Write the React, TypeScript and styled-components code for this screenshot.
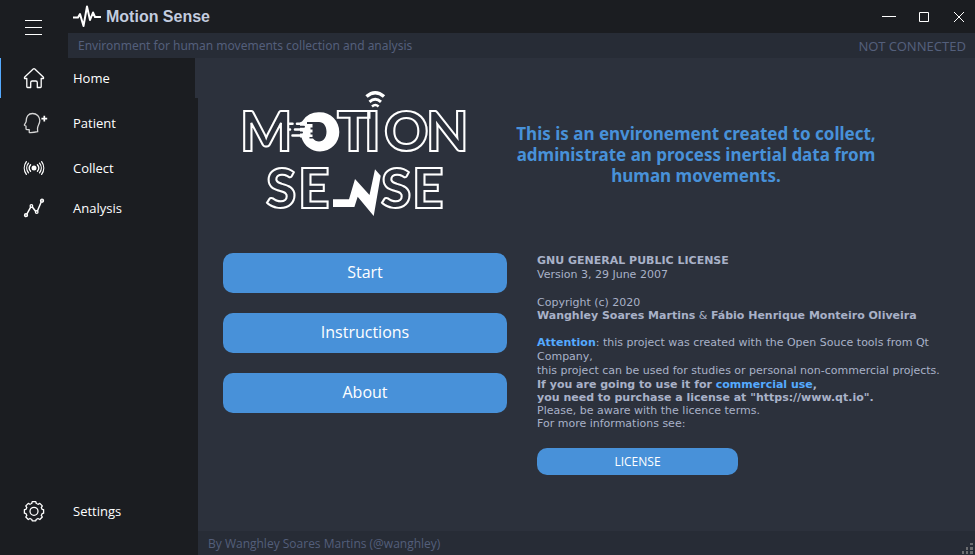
import React from "react";
import styled, { createGlobalStyle } from "styled-components";

const ui = `"Open Sans", "Noto Sans", sans-serif`;

const GlobalStyle = createGlobalStyle`
  * { box-sizing: border-box; }
  html, body, #root { height: 100%; }
  body { margin: 0; background: #2c313c; font-family: ${ui}; font-size: 13px; }
  button { font: inherit; color: inherit; border: 0; padding: 0; background: none; cursor: pointer; }
`;

const Shell = styled.div`
  min-height: 100%;
  display: grid;
  grid-template-rows: auto 1fr;
`;

const Header = styled.header`
  display: grid;
  grid-template-columns: 68px 1fr;
  background: #1b1d21;
`;

const MenuButton = styled.button`
  display: grid;
  place-items: center;
  padding-bottom: 2px;
  color: #fff;
`;

const TitleBar = styled.div`
  height: 33px;
  display: flex;
  align-items: center;
  justify-content: space-between;
  padding: 0 5px;
`;

const Brand = styled.h1`
  display: flex;
  align-items: center;
  gap: 5px;
  margin: 0;
  font: bold 16px/20px "Liberation Sans", Arial, sans-serif;
  color: #c3ccdf;
`;

const WindowControls = styled.div`
  display: flex;
  gap: 13px;
`;

const WindowButton = styled.button`
  display: grid;
  place-items: center;
  width: 22px;
  height: 28px;
  color: #fff;
`;

const StatusBar = styled.div`
  height: 25px;
  display: flex;
  align-items: center;
  justify-content: space-between;
  padding: 0 9px 0 10px;
  background: #272c36;
  color: #545f7b;
  font-family: "Noto Sans", sans-serif;
`;

const Tagline = styled.span`
  font-size: 12px;
`;

const Body = styled.div`
  display: grid;
  grid-template-columns: 198px 1fr;
`;

const Sidebar = styled.nav`
  display: flex;
  flex-direction: column;
  padding-bottom: 24px;
  background: #1b1d21;
`;

const NavItem = styled.button<{ $active?: boolean; $tall?: boolean; $last?: boolean }>`
  display: grid;
  grid-template-columns: 68px 1fr;
  align-items: center;
  height: ${(p) => (p.$tall ? 50 : 40)}px;
  margin-top: ${(p) => (p.$last ? "auto" : 0)};
  color: #fff;
  text-align: left;
  box-shadow: ${(p) => (p.$active ? "inset 1px 0 #55aaff, inset -3px 0 #2c313c" : "none")};
  svg { justify-self: center; }
  span { padding-left: 5px; }
`;

const IconFrame = styled.svg`
  overflow: visible;
`;

const Main = styled.main`
  display: grid;
  grid-template-rows: 1fr auto;
  background: #2c313c;
`;

const Page = styled.div`
  padding: 30px 25px 0;
`;

const Hero = styled.section`
  display: flex;
  align-items: center;
  gap: 35px;
  padding-left: 17px;
`;

const Headline = styled.h2`
  flex: 1;
  max-width: 382px;
  margin: 0;
  text-align: center;
  font-family: "Noto Sans", sans-serif;
  font-size: 17px;
  line-height: 21px;
  color: #4891d9;
`;

const Columns = styled.section`
  display: grid;
  grid-template-columns: 284fr 413fr;
  gap: 30px;
  margin-top: 33px;
`;

const Actions = styled.div`
  display: flex;
  flex-direction: column;
  gap: 20px;
`;

const ActionButton = styled.button`
  height: 40px;
  padding-bottom: 2px;
  border-radius: 10px;
  background: #4891d9;
  color: #fff;
  font-size: 16px;
`;

const License = styled.div`
  padding-top: 1px;
  color: #a9b1c8;
  font: 11px/14px "DejaVu Sans", sans-serif;
`;

const Paragraph = styled.p<{ $joined?: boolean; $tight?: boolean }>`
  margin: 0 0 ${(p) => (p.$joined ? 0 : 14)}px;
  line-height: ${(p) => (p.$tight ? 13 : 14)}px;
`;

const Accent = styled.b`
  color: #55aaff;
`;

const LicenseButton = styled.button`
  width: 201px;
  height: 27px;
  margin-top: 4px;
  border-radius: 10px;
  background: #4891d9;
  color: #fff;
  font: 12px ${ui};
`;

const Footer = styled.footer`
  display: flex;
  align-items: center;
  justify-content: space-between;
  height: 24px;
  padding-left: 10px;
  background: #272c36;
  color: #545f7b;
  font-size: 12px;
  svg { align-self: flex-end; }
`;

const LogoText = styled.text`
  font-family: Lato, "Open Sans", sans-serif;
  font-weight: 900;
  font-size: 55px;
  fill: none;
  stroke: #fff;
  stroke-width: 2;
`;

function Icon({ children }: { children: React.ReactNode }) {
  return (
    <IconFrame width="24" height="24" viewBox="0 0 24 24" fill="none" stroke="#fff" strokeWidth="1.3" strokeLinejoin="round" strokeLinecap="round" aria-hidden="true">
      {children}
    </IconFrame>
  );
}

function HomeIcon() {
  return (
    <Icon>
      <path d="M11.2 3 2.5 11.2v1.3h2.3v8.3q0 .7.7.7h3.2v-5q0-1.5 1.5-1.5h3.6q1.5 0 1.5 1.5v5h3.2q.7 0 .7-.7v-8.3h2.3v-1.3L12.8 3q-.8-.7-1.6 0Z" />
    </Icon>
  );
}

function PatientIcon() {
  return (
    <Icon>
      <path d="M7.300 21.500 7.200 18.600H5.200q-1.200 0-1.200-1.200v-2.400l-1.300-.5q-.5-.3-.2-.8l1.600-3C4 5.500 6.500 2.500 10.500 2.500c4.200 0 7.300 2.800 7.300 7 0 3.600-2.300 5-2.300 8.300l.2 2.900q-4.300 1-8.400.8Z" stroke="#d5d5d5" />
      <path d="M22.300 4.700v5.800M19.400 7.600h5.800" strokeWidth="1.700" strokeLinecap="butt" />
    </Icon>
  );
}

function CollectIcon() {
  return (
    <Icon>
      <circle cx="12" cy="12" r="2.500" fill="#fff" stroke="none" />
      <path d="M8.600 8.700a5 5 0 0 0 0 6.600M6.500 7.200a7.500 7.500 0 0 0 0 9.600M4.400 5.700a10.500 10.500 0 0 0 0 12.600M15.400 8.700a5 5 0 0 1 0 6.600M17.500 7.200a7.500 7.500 0 0 1 0 9.600M19.600 5.700a10.500 10.500 0 0 1 0 12.600" />
    </Icon>
  );
}

function AnalysisIcon() {
  return (
    <Icon>
      <path d="m4.700 18.400 4-7.200m1.800.1 3.300 4.200m1.700-.8 3.900-9.200" strokeWidth="1.500" />
      <circle cx="4" cy="19.200" r="1.500" fill="#aaa" />
      <circle cx="9.400" cy="10" r="1.300" />
      <circle cx="14.700" cy="16" r="1.300" />
      <circle cx="20" cy="4.700" r="1.500" fill="#aaa" />
    </Icon>
  );
}

function SettingsIcon() {
  return (
    <Icon>
      <path d="M9.700 4.500 10.200 2.700h3.600l.5 1.800q1 .3 1.700.8l1.800-.9 2.500 2.500-1 1.700q.5.800.8 1.700l1.500.4v3.500l-1.500.4q-.3.900-.8 1.700l1 1.700-2.500 2.500-1.800-1q-.7.500-1.700.8l-.5 1.500h-3.600l-.5-1.500q-.900-.3-1.700-.8l-1.700 1-2.500-2.500 1-1.700q-.5-.8-.8-1.700l-1.600-.4v-3.500l1.600-.4q.3-.9.8-1.700l-1-1.700 2.500-2.500 1.700.9q.8-.5 1.700-.8Z" />
      <circle cx="12" cy="12.300" r="4" />
    </Icon>
  );
}

function Logo() {
  return (
    <svg width="230" height="132" viewBox="240 88 230 132" role="img" aria-label="Motion Sense">
      <LogoText y="151">
        <tspan x="240">M</tspan>
        <tspan x="337">T</tspan>
        <tspan x="364">I</tspan>
        <tspan x="384">O</tspan>
        <tspan x="426">N</tspan>
      </LogoText>
      <LogoText y="208">
        <tspan x="266">S</tspan>
        <tspan x="298">E</tspan>
        <tspan x="381">S</tspan>
        <tspan x="412">E</tspan>
      </LogoText>
      <path
        fill="#fff"
        fillRule="evenodd"
        d="M320 112.300a19.300 19.600 0 1 1 0 39.200a19.300 19.600 0 0 1-18.500-14h-1.500v-15l2-1a19 19 0 0 1 18-9.200ZM307 122v2h5.500v3.500h-2v2h2v3h-2v2h2v2.500h-3v1.500h3.500c1.500 2 3.500 3 6 3 4.500 0 7.500-4 7.500-9.700s-3-9.800-7.500-9.800Z"
      />
      <path d="M289.500 123.800h3M297 123.800h7M289.500 129.500h.5M295 129.500h7M292.500 135.500h9" stroke="#fff" strokeWidth="2.600" strokeLinecap="round" />
      <path d="M298 126.700h6M298 132.500h4" stroke="#2c313c" strokeWidth="2" strokeLinecap="round" />
      <g fill="none" stroke="#fff" strokeWidth="3.500">
        <path d="M366.500 96.500q8.700-7.500 17.500 0" />
        <path d="M369.500 101.800q5.700-5 11.500 0" strokeWidth="3" />
        <path d="M372 106.500q3.300-3 6.600 0" strokeWidth="2.500" />
      </g>
      <path d="M333 199.300h16l6-20.300 14.500 16 5.500-25.700 5.700 6.400-7 40.300-16-19.300-3.300 10.300H333Z" fill="#fff" />
    </svg>
  );
}

const navItems = [
  { label: "Home", icon: <HomeIcon />, active: true },
  { label: "Patient", icon: <PatientIcon />, tall: true },
  { label: "Collect", icon: <CollectIcon /> },
  { label: "Analysis", icon: <AnalysisIcon /> },
];

export default function App() {
  return (
    <Shell>
      <GlobalStyle />
      <Header>
        <MenuButton aria-label="Toggle menu">
          <svg width="18" height="16" viewBox="0 0 18 16" stroke="currentColor" aria-hidden="true">
            <path d="M0 .5h17M0 7.500h17M0 14.500h17" />
          </svg>
        </MenuButton>
        <div>
          <TitleBar>
            <Brand>
              <svg width="28" height="24" viewBox="0 0 28 24" fill="none" stroke="#fff" strokeWidth="2" strokeLinejoin="round" aria-hidden="true">
                <path d="M0 12.500h5l2-3.500 3.500 12L14 1.500l3 13.500 3-7.500 2 4.500h6" />
              </svg>
              Motion Sense
            </Brand>
            <WindowControls>
              <WindowButton aria-label="Minimize">
                <svg width="14" height="12" viewBox="0 0 14 12" stroke="currentColor"><path d="M0 5.500h14" /></svg>
              </WindowButton>
              <WindowButton aria-label="Maximize">
                <svg width="10" height="10" viewBox="0 0 10 10" fill="none" stroke="currentColor"><path d="M.5.500h9v9h-9z" /></svg>
              </WindowButton>
              <WindowButton aria-label="Close">
                <svg width="10" height="10" viewBox="0 0 10 10" stroke="currentColor"><path d="m0 0 10 10M10 0 0 10" /></svg>
              </WindowButton>
            </WindowControls>
          </TitleBar>
          <StatusBar>
            <Tagline>Environment for human movements collection and analysis</Tagline>
            <span>NOT CONNECTED</span>
          </StatusBar>
        </div>
      </Header>
      <Body>
        <Sidebar>
          {navItems.map((item) => (
            <NavItem key={item.label} $active={item.active} $tall={item.tall}>
              {item.icon}
              <span>{item.label}</span>
            </NavItem>
          ))}
          <NavItem $last>
            <SettingsIcon />
            <span>Settings</span>
          </NavItem>
        </Sidebar>
        <Main>
          <Page>
            <Hero>
              <Logo />
              <Headline>
                This is an environement created to collect,
                <br />
                administrate an process inertial data from
                <br />
                human movements.
              </Headline>
            </Hero>
            <Columns>
              <Actions>
                <ActionButton>Start</ActionButton>
                <ActionButton>Instructions</ActionButton>
                <ActionButton>About</ActionButton>
              </Actions>
              <License>
                <Paragraph>
                  <b>GNU GENERAL PUBLIC LICENSE</b>
                  <br />
                  Version 3, 29 June 2007
                </Paragraph>
                <Paragraph $tight>
                  Copyright (c) 2020
                  <br />
                  <b>Wanghley Soares Martins</b> &amp; <b>Fábio Henrique Monteiro Oliveira</b>
                </Paragraph>
                <Paragraph $joined>
                  <Accent>Attention</Accent>: this project was created with the Open Souce tools from Qt Company,
                  <br />
                  this project can be used for studies or personal non-commercial projects.
                </Paragraph>
                <Paragraph $tight>
                  <b>
                    If you are going to use it for <Accent>commercial use</Accent>,
                    <br />
                    you need to purchase a license at "https://www.qt.io".
                  </b>
                  <br />
                  Please, be aware with the licence terms.
                  <br />
                  For more informations see:
                </Paragraph>
                <LicenseButton>LICENSE</LicenseButton>
              </License>
            </Columns>
          </Page>
          <Footer>
            <span>By Wanghley Soares Martins (@wanghley)</span>
            <svg width="14" height="13" viewBox="0 0 14 13" fill="#6b6c6f" aria-hidden="true">
              <path d="M9 1h3v2H9zM5 5h2v3H5zM9 5h3v3H9zM1 9h2v3H1zM5 9h2v3H5zM9 9h3v3H9z" />
            </svg>
          </Footer>
        </Main>
      </Body>
    </Shell>
  );
}
